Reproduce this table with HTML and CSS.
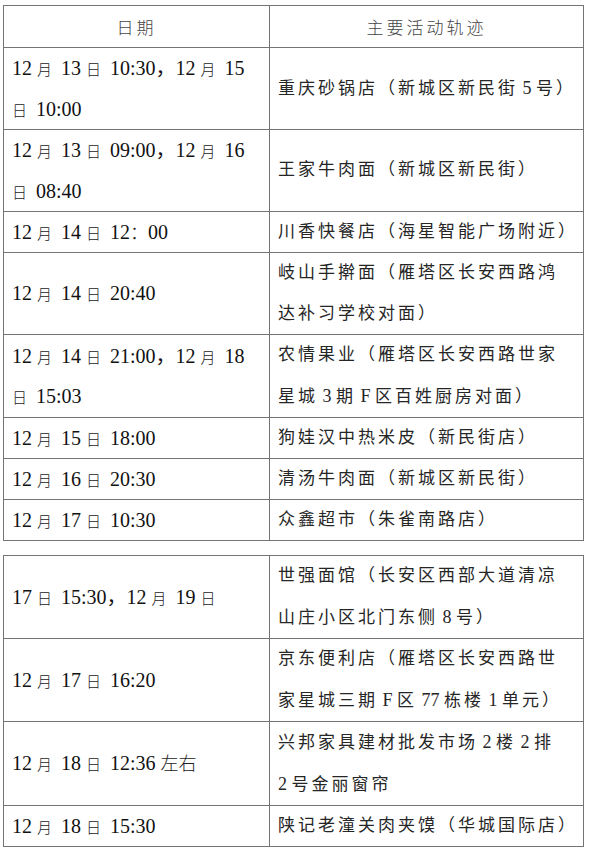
FILE: index.html
```html
<!DOCTYPE html>
<html lang="zh-CN">
<head>
<meta charset="utf-8">
<title>活动轨迹</title>
<link rel="stylesheet" href="styles.css">
</head>
<body>
<div class="page">
  <table class="trace">
    <colgroup><col class="c-date"><col class="c-place"></colgroup>
    <thead>
      <tr><th>日期</th><th>主要活动轨迹</th></tr>
    </thead>
    <tbody>
      <tr class="two">
        <td class="date">12 <span class="cj">月</span> 13 <span class="cj">日</span> 10:30，12 <span class="cj">月</span> 15<br><span class="cj">日</span> 10:00</td>
        <td class="place">重庆砂锅店（新城区新民街<span class="n"> 5 </span>号）</td>
      </tr>
      <tr class="two">
        <td class="date">12 <span class="cj">月</span> 13 <span class="cj">日</span> 09:00，12 <span class="cj">月</span> 16<br><span class="cj">日</span> 08:40</td>
        <td class="place">王家牛肉面（新城区新民街）</td>
      </tr>
      <tr>
        <td class="date">12 <span class="cj">月</span> 14 <span class="cj">日</span> 12<span class="cw">：</span>00</td>
        <td class="place">川香快餐店（海星智能广场附近）</td>
      </tr>
      <tr class="two">
        <td class="date">12 <span class="cj">月</span> 14 <span class="cj">日</span> 20:40</td>
        <td class="place">岐山手擀面（雁塔区长安西路鸿<br>达补习学校对面）</td>
      </tr>
      <tr class="two">
        <td class="date">12 <span class="cj">月</span> 14 <span class="cj">日</span> 21:00，12 <span class="cj">月</span> 18<br><span class="cj">日</span> 15:03</td>
        <td class="place">农情果业（雁塔区长安西路世家<br>星城<span class="n"> 3 </span>期<span class="n"> F </span>区百姓厨房对面）</td>
      </tr>
      <tr>
        <td class="date">12 <span class="cj">月</span> 15 <span class="cj">日</span> 18:00</td>
        <td class="place">狗娃汉中热米皮（新民街店）</td>
      </tr>
      <tr>
        <td class="date">12 <span class="cj">月</span> 16 <span class="cj">日</span> 20:30</td>
        <td class="place">清汤牛肉面（新城区新民街）</td>
      </tr>
      <tr>
        <td class="date">12 <span class="cj">月</span> 17 <span class="cj">日</span> 10:30</td>
        <td class="place">众鑫超市（朱雀南路店）</td>
      </tr>
    </tbody>
  </table>

  <table class="trace second">
    <colgroup><col class="c-date"><col class="c-place"></colgroup>
    <tbody>
      <tr class="two">
        <td class="date">17 <span class="cj">日</span> 15:30，12 <span class="cj">月</span> 19 <span class="cj">日</span></td>
        <td class="place">世强面馆（长安区西部大道清凉<br>山庄小区北门东侧<span class="n"> 8 </span>号）</td>
      </tr>
      <tr class="two">
        <td class="date">12 <span class="cj">月</span> 17 <span class="cj">日</span> 16:20</td>
        <td class="place">京东便利店（雁塔区长安西路世<br>家星城三期<span class="n"> F </span>区<span class="n"> 77 </span>栋楼<span class="n"> 1 </span>单元）</td>
      </tr>
      <tr class="two">
        <td class="date">12 <span class="cj">月</span> 18 <span class="cj">日</span> 12:36 <span class="cw">左右</span></td>
        <td class="place">兴邦家具建材批发市场<span class="n"> 2 </span>楼<span class="n"> 2 </span>排<br><span class="n">2 </span>号金丽窗帘</td>
      </tr>
      <tr>
        <td class="date">12 <span class="cj">月</span> 18 <span class="cj">日</span> 15:30</td>
        <td class="place">陕记老潼关肉夹馍（华城国际店）</td>
      </tr>
    </tbody>
  </table>
</div>
</body>
</html>
```

FILE: styles.css
```css
html, body {
  margin: 0;
  padding: 0;
  background: #ffffff;
}

.page {
  padding: 5px 0 0 3px;
  width: 580px;
}

.trace {
  border-collapse: collapse;
  width: 580px;
  table-layout: fixed;
  color: #151515;
}

.trace.second {
  margin-top: 14px;
}

.c-date { width: 266px; }
.c-place { width: 314px; }

.trace th,
.trace td {
  border: 1px solid #747474;
  padding: 0 8px;
  vertical-align: middle;
  white-space: nowrap;
  overflow: visible;
  line-height: 40px;
}

.trace tr.two td {
  line-height: 40.5px;
}

.trace th {
  height: 41px;
  line-height: 41px;
  font-family: "Noto Sans CJK SC", sans-serif;
  font-weight: 300;
  font-size: 17px;
  letter-spacing: 3px;
  color: #454545;
  text-align: center;
}

.date {
  font-family: "Liberation Serif", "Noto Sans CJK SC", serif;
  font-size: 20px;
  color: #111111;
  padding-left: 9px;
}

.date .cj {
  font-family: "Noto Sans CJK SC", sans-serif;
  font-weight: 300;
  font-size: 15px;
  line-height: 1;
  padding-right: 4px;
  color: #222222;
}

.date .cw {
  font-family: "Noto Sans CJK SC", sans-serif;
  font-weight: 300;
  font-size: 18px;
  line-height: 1;
  color: #222222;
}

.place {
  font-family: "Liberation Serif", "Noto Sans CJK SC", serif;
  font-size: 17px;
  letter-spacing: 3px;
  color: #262626;
  padding-left: 8px;
}

.place .n {
  letter-spacing: 0;
  font-size: 18px;
}
```
